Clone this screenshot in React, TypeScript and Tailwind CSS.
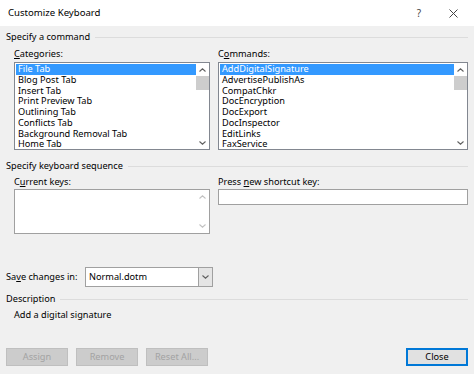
import type { ReactNode } from 'react'

const categories = [
  'File Tab',
  'Blog Post Tab',
  'Insert Tab',
  'Print Preview Tab',
  'Outlining Tab',
  'Conflicts Tab',
  'Background Removal Tab',
  'Home Tab',
]

const commands = [
  'AddDigitalSignature',
  'AdvertisePublishAs',
  'CompatChkr',
  'DocEncryption',
  'DocExport',
  'DocInspector',
  'EditLinks',
  'FaxService',
]

function Chevron({ up, faint }: { up?: boolean; faint?: boolean }) {
  return (
    <svg width="7" height="4" viewBox="0 0 7 4" className="block">
      <path
        d={up ? 'M0.5 3.5 L3.5 0.8 L6.5 3.5' : 'M0.5 0.5 L3.5 3.2 L6.5 0.5'}
        fill="none"
        stroke={faint ? '#c2c2c2' : '#606060'}
        strokeWidth="1.1"
      />
    </svg>
  )
}

function SectionHeader({ title, className }: { title: string; className?: string }) {
  return (
    <div className={`flex items-center h-[12px] ${className ?? ''}`}>
      <span className="text-[9.2px] leading-[12px] text-black whitespace-nowrap pr-[5px]">{title}</span>
      <div className="flex-1 h-px bg-[#dcdcdc]" />
    </div>
  )
}

function ListBox({ items }: { items: string[] }) {
  return (
    <div className="flex h-[88px] border border-[#828790] bg-white">
      <div className="flex-1 pt-[1px] pl-[1px] overflow-hidden">
        {items.map((item, i) => (
          <div
            key={item}
            className={`h-[10.75px] leading-[10.75px] pl-[2px] text-[9.2px] whitespace-nowrap ${
              i === 0 ? 'bg-[#3399ff] text-white' : 'text-black'
            }`}
          >
            {item}
          </div>
        ))}
      </div>
      <div className="w-[13px] flex flex-col items-center">
        <div className="h-[13px] flex items-center justify-center">
          <Chevron up />
        </div>
        <div className="w-full h-[14px] bg-[#cdcdcd]" />
        <div className="flex-1" />
        <div className="h-[13px] flex items-center justify-center">
          <Chevron />
        </div>
      </div>
    </div>
  )
}

function Label({ children, className }: { children: ReactNode; className?: string }) {
  return (
    <div className={`text-[9.2px] leading-[12px] text-black whitespace-nowrap ${className ?? ''}`}>
      {children}
    </div>
  )
}

function DisabledButton({ label }: { label: string }) {
  return (
    <div className="w-[62px] h-[18px] bg-[#cccccc] border border-[#bfbfbf] flex items-center justify-center text-[9.2px] text-[#a3a3a3]">
      {label}
    </div>
  )
}

export default function App() {
  return (
    <div
      className="w-[474px] h-[374px] overflow-hidden bg-[#f0f0f0] text-black"
      style={{ fontFamily: '"Noto Sans", "Open Sans", sans-serif' }}
    >
      {/* title bar */}
      <div className="h-[26px] bg-white flex items-center pl-[8px] pr-[16px]">
        <span className="text-[9.6px] text-black flex-1">Customize Keyboard</span>
        <span className="text-[10px] text-[#444] mr-[28px]">?</span>
        <svg width="9" height="9" viewBox="0 0 9 9">
          <path d="M0.5 0.5 L8.5 8.5 M8.5 0.5 L0.5 8.5" stroke="#444" strokeWidth="1" />
        </svg>
      </div>

      <div className="px-[6px]">
        <SectionHeader title="Specify a command" className="mt-[5px]" />

        <div className="pl-[8px] grid grid-cols-[196px_250px] gap-x-[8px] mt-[5px]">
          <Label>
            <span className="underline">C</span>ategories:
          </Label>
          <Label>
            C<span className="underline">o</span>mmands:
          </Label>
          <div className="mt-[2px]">
            <ListBox items={categories} />
          </div>
          <div className="mt-[2px]">
            <ListBox items={commands} />
          </div>
        </div>

        <SectionHeader title="Specify keyboard sequence" className="mt-[10px]" />

        <div className="pl-[8px] grid grid-cols-[196px_250px] gap-x-[8px] mt-[4px]">
          <Label>
            C<span className="underline">u</span>rrent keys:
          </Label>
          <Label>
            Press <span className="underline">n</span>ew shortcut key:
          </Label>
          <div className="mt-[1px] h-[45px] border border-[#a0a0a0] bg-white flex justify-end">
            <div className="w-[13px] flex flex-col items-center justify-between py-[5px]">
              <Chevron up faint />
              <Chevron faint />
            </div>
          </div>
          <div className="mt-[1px] h-[16px] border border-[#a0a0a0] bg-white" />
        </div>

        <div className="flex items-center mt-[33px] h-[20px]">
          <Label className="w-[79px]">
            Sa<span className="underline">v</span>e changes in:
          </Label>
          <div className="w-[128px] h-[20px] border border-[#a0a0a0] bg-white flex">
            <span className="flex-1 pl-[3px] text-[9.2px] leading-[18px]">Normal.dotm</span>
            <div className="w-[14px] h-full bg-[#e5e5e5] border-l border-[#a0a0a0] flex items-center justify-center">
              <Chevron />
            </div>
          </div>
        </div>

        <SectionHeader title="Description" className="mt-[6px]" />
        <Label className="mt-[4px] pl-[8px]">Add a digital signature</Label>

        <div className="flex items-center mt-[27px]">
          <div className="flex gap-[8px]">
            <DisabledButton label="Assign" />
            <DisabledButton label="Remove" />
            <DisabledButton label="Reset All..." />
          </div>
          <div className="flex-1" />
          <div className="w-[62px] h-[18px] bg-[#e1e1e1] border-2 border-[#0078d7] flex items-center justify-center text-[9.2px] text-black">
            Close
          </div>
        </div>
      </div>
    </div>
  )
}
